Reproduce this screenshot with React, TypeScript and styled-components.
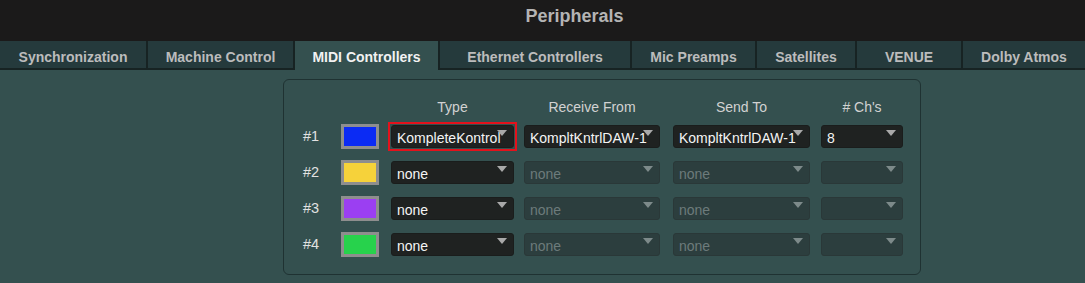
import React from 'react';
import styled, { createGlobalStyle } from 'styled-components';

const GlobalStyle = createGlobalStyle`
  html, body {
    margin: 0;
    padding: 0;
    background: #34504f;
    font-family: "Liberation Sans", Arial, sans-serif;
  }
`;

const Page = styled.div`
  width: 1085px;
  height: 283px;
  display: flex;
  flex-direction: column;
  overflow: hidden;
  background: #34504f;
`;

const TitleBar = styled.div`
  height: 41px;
  background: #1b1a1a;
  display: flex;
  align-items: center;
  justify-content: center;
  padding: 0 0 9px 64px;
  box-sizing: border-box;
  color: #b4b4b4;
  font-size: 18px;
  font-weight: bold;
`;

const TabRow = styled.div`
  display: flex;
  height: 29px;
  background: #1b1a1a;
`;

const Tab = styled.div<{ $w: number; $active?: boolean }>`
  width: ${(p) => p.$w}px;
  box-sizing: border-box;
  display: flex;
  align-items: center;
  justify-content: center;
  font-size: 14px;
  font-weight: bold;
  color: ${(p) => (p.$active ? '#f2f2f2' : '#bcbcbc')};
  background: ${(p) => (p.$active ? '#34504f' : '#253a3c')};
  border-right: 2px solid #172323;
  border-bottom: ${(p) => (p.$active ? 'none' : '2px solid #172323')};
  padding-top: ${(p) => (p.$active ? '3px' : '4px')};
  &:last-child {
    border-right: none;
  }
`;

const Content = styled.div`
  flex: 1;
  padding: 9px 0 0 283px;
`;

const Panel = styled.div`
  width: 638px;
  height: 196px;
  box-sizing: border-box;
  border: 1px solid #1f3232;
  border-radius: 6px;
  padding: 13px 0 0 19px;
  display: grid;
  grid-template-columns: 38px 50px 133px 149px 148px 82px;
  grid-template-rows: 25px repeat(4, 36px);
  align-items: center;
`;

const Head = styled.div<{ $w: number }>`
  width: ${(p) => p.$w}px;
  color: #d2d2d2;
  font-size: 14px;
  text-align: center;
  padding-top: 2px;
`;

const Label = styled.div`
  color: #e2e2e2;
  font-size: 14.5px;
`;

const Swatch = styled.div<{ $color: string }>`
  width: 38px;
  height: 25px;
  box-sizing: border-box;
  border: 3px solid #8e8e8e;
  background: ${(p) => p.$color};
`;

const Select = styled.div<{ $w: number; $disabled?: boolean; $focus?: boolean }>`
  position: relative;
  width: ${(p) => p.$w}px;
  height: 23px;
  box-sizing: border-box;
  border-radius: 3px;
  background: ${(p) => (p.$disabled ? '#2c3e3e' : '#1f2221')};
  border: 1px solid ${(p) => (p.$disabled ? '#2a3838' : '#1a1d1c')};
  color: ${(p) => (p.$disabled ? '#6d7b7b' : '#f4f4f4')};
  font-size: 14px;
  display: flex;
  align-items: center;
  padding: 3px 0 0 5px;
  white-space: nowrap;

  ${(p) =>
    p.$focus &&
    `
    &::after {
      content: '';
      position: absolute;
      inset: -4px -4px -4px -4px;
      border: 2.5px solid #e3121c;
    }
  `}
`;

const Arrow = styled.span<{ $disabled?: boolean }>`
  position: absolute;
  right: 6px;
  top: 4px;
  width: 0;
  height: 0;
  border-left: 5px solid transparent;
  border-right: 5px solid transparent;
  border-top: 6px solid ${(p) => (p.$disabled ? '#7d8a8a' : '#a9a9a9')};
`;

const Dropdown: React.FC<{ w: number; text?: string; disabled?: boolean; focus?: boolean }> = ({
  w,
  text,
  disabled,
  focus,
}) => (
  <Select $w={w} $disabled={disabled} $focus={focus}>
    {text}
    <Arrow $disabled={disabled} />
  </Select>
);

const tabs = [
  { name: 'Synchronization', w: 148 },
  { name: 'Machine Control', w: 147 },
  { name: 'MIDI Controllers', w: 145, active: true },
  { name: 'Ethernet Controllers', w: 192 },
  { name: 'Mic Preamps', w: 125 },
  { name: 'Satellites', w: 100 },
  { name: 'VENUE', w: 106 },
  { name: 'Dolby Atmos', w: 122 },
];

const rows = [
  { id: '#1', color: '#0b2bf4', type: 'KompleteKontrol', active: true },
  { id: '#2', color: '#f6d23a', type: 'none' },
  { id: '#3', color: '#9b3ff2', type: 'none' },
  { id: '#4', color: '#27d24c', type: 'none' },
];

const App: React.FC = () => {
  return (
    <Page>
      <GlobalStyle />
      <TitleBar>Peripherals</TitleBar>
      <TabRow>
        {tabs.map((t) => (
          <Tab key={t.name} $w={t.w} $active={t.active}>
            {t.name}
          </Tab>
        ))}
      </TabRow>
      <Content>
        <Panel>
          <div />
          <div />
          <Head $w={123}>Type</Head>
          <Head $w={136}>Receive From</Head>
          <Head $w={137}>Send To</Head>
          <Head $w={82}>{"# Ch's"}</Head>
          {rows.map((r) => (
            <React.Fragment key={r.id}>
              <Label>{r.id}</Label>
              <Swatch $color={r.color} />
              <Dropdown w={123} text={r.type} focus={r.active} />
              <Dropdown w={136} text={r.active ? 'KompltKntrlDAW-1' : 'none'} disabled={!r.active} />
              <Dropdown w={137} text={r.active ? 'KompltKntrlDAW-1' : 'none'} disabled={!r.active} />
              <Dropdown w={82} text={r.active ? '8' : ''} disabled={!r.active} />
            </React.Fragment>
          ))}
        </Panel>
      </Content>
    </Page>
  );
};

export default App;
